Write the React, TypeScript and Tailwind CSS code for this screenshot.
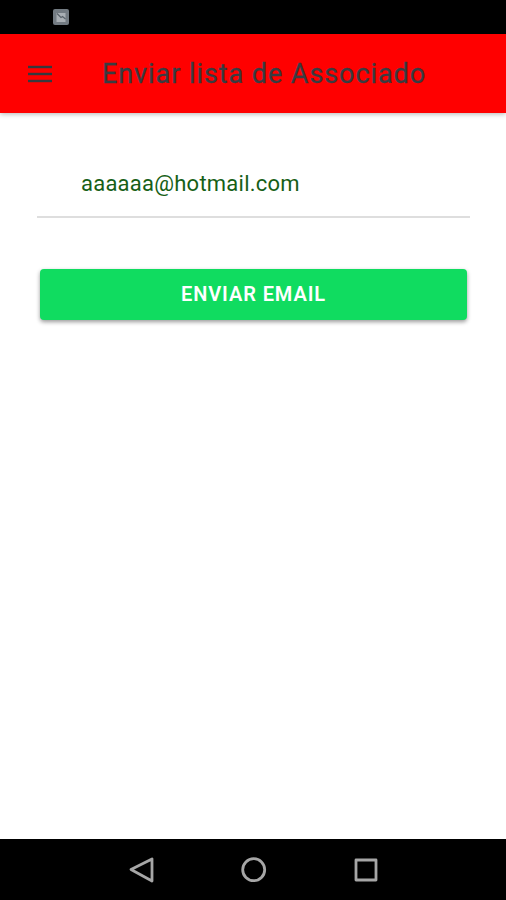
export default function App() {
  return (
    <div className="flex h-[900px] w-[506px] flex-col overflow-hidden bg-white font-['Roboto',sans-serif]">
      {/* Status bar */}
      <div className="flex h-[34px] shrink-0 items-center bg-black pl-[53px]">
        <svg width="16" height="16" viewBox="0 0 16 16">
          <rect width="16" height="16" rx="2" fill="#737b82" />
          <rect x="3.5" y="4" width="9" height="9" fill="#a9afb4" />
          <path d="M4 4.5l4 4 1.5-1L12.5 10" fill="none" stroke="#59626a" strokeWidth="1.2" />
        </svg>
      </div>

      {/* Toolbar */}
      <header className="relative z-10 flex h-[79px] shrink-0 items-center bg-[#ff0000] pl-7 shadow-[0_1px_5px_rgba(0,0,0,0.3)]">
        <button aria-label="Menu">
          <svg width="24" height="18" viewBox="0 0 24 18" fill="#36393f">
            <rect y="0.8" width="24" height="2.4" />
            <rect y="7.8" width="24" height="2.4" />
            <rect y="14.8" width="24" height="2.4" />
          </svg>
        </button>
        <h1 className="ml-[50px] pt-px text-[27px] font-normal tracking-[0.93px] whitespace-nowrap text-[#383c42] [-webkit-text-stroke:0.3px_#383c42]">
          Enviar lista de Associado
        </h1>
      </header>

      <main className="flex-1 px-[37px] pt-9">
        <div className="flex h-[69px] w-[433px] items-center border-b-2 border-[#dedede] pl-11">
          <span className="pt-px text-[22px] tracking-[0.24px] text-[#175f17]">aaaaaa@hotmail.com</span>
        </div>
        <button className="mx-[3px] mt-[51px] flex h-[51px] w-[427px] items-center justify-center rounded-[4px] bg-[#10dc60] pb-[2px] text-[20px] font-semibold tracking-[0.9px] text-white shadow-[0_2px_4px_rgba(0,0,0,0.4)]">
          ENVIAR EMAIL
        </button>
      </main>

      {/* Android navigation */}
      <nav className="flex h-[61px] shrink-0 items-center justify-center bg-black">
        <svg width="252" height="28" viewBox="0 0 252 28" fill="none" stroke="#a6a6a6" strokeWidth="2.8" strokeLinejoin="round">
          <path d="M25 3v22L4 13.5z" />
          <circle cx="126.7" cy="13.7" r="11" />
          <rect x="229" y="4" width="20" height="20" />
        </svg>
      </nav>
    </div>
  )
}
